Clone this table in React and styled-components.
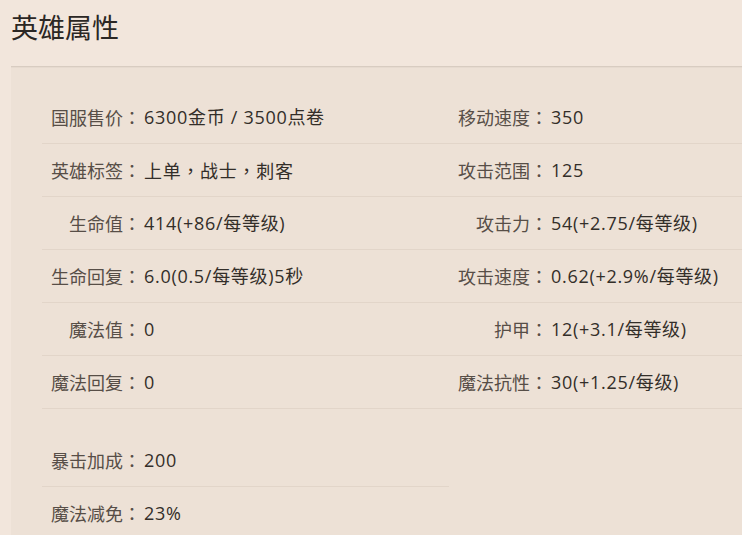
import React from 'react';
import styled, { createGlobalStyle } from 'styled-components';

const Global = createGlobalStyle`
  html, body { margin: 0; padding: 0; background: #f2e6dc; overflow: hidden; }
  body { font-family: "Open Sans", "Noto Sans CJK SC", sans-serif; }
`;

const Page = styled.div`
  width: 742px;
  height: 535px;
  padding-left: 11px;
  box-sizing: border-box;
`;

const Heading = styled.h2`
  margin: 0;
  height: 66px;
  padding: 9px 0 0 0;
  box-sizing: border-box;
  font-size: 27px;
  font-weight: 400;
  line-height: 38px;
  color: #2b2724;
`;

const Panel = styled.section`
  background: #ede1d6;
  border-top: 1px solid #d8ccc1;
  box-shadow: 0 1px 0 #e6dacf inset;
  padding: 24px 0 0 31px;
  height: 470px;
  box-sizing: border-box;
`;

const Grid = styled.div`
  display: grid;
  grid-template-columns: ${p => p.$cols};
  margin-bottom: 25px;
`;

const Cell = styled.div`
  display: flex;
  align-items: center;
  height: 52px;
  border-bottom: 1px solid #e2d5c9;
  font-size: 18px;
  line-height: 24px;
  white-space: nowrap;
`;

const Label = styled.span`
  width: 99px;
  text-align: right;
  color: #574e47;
`;

const Value = styled.span`
  padding-left: 3px;
  letter-spacing: 0.7px;
  color: #332e29;
`;

/* centred full-width punctuation, as in the original page font */
const Punct = styled.span`
  font-family: "Noto Sans CJK TC", "Noto Sans CJK SC", sans-serif;
`;

const withPunct = text =>
  text.split(/(，)/).map((part, i) => (part === '，' ? <Punct key={i}>，</Punct> : part));

const Stat = ({ label, value }) => (
  <Cell>
    <Label>{label}<Punct>：</Punct></Label>
    <Value>{withPunct(value)}</Value>
  </Cell>
);

const main = [
  ['国服售价', '6300金币 / 3500点卷'], ['移动速度', '350'],
  ['英雄标签', '上单，战士，刺客'], ['攻击范围', '125'],
  ['生命值', '414(+86/每等级)'], ['攻击力', '54(+2.75/每等级)'],
  ['生命回复', '6.0(0.5/每等级)5秒'], ['攻击速度', '0.62(+2.9%/每等级)'],
  ['魔法值', '0'], ['护甲', '12(+3.1/每等级)'],
  ['魔法回复', '0'], ['魔法抗性', '30(+1.25/每级)'],
];

const extra = [
  ['暴击加成', '200'],
  ['魔法减免', '23%'],
];

export default function App() {
  return (
    <Page>
      <Global />
      <Heading>英雄属性</Heading>
      <Panel>
        <Grid $cols="407px 1fr">
          {main.map(([l, v]) => <Stat key={l} label={l} value={v} />)}
        </Grid>
        <Grid $cols="407px">
          {extra.map(([l, v]) => <Stat key={l} label={l} value={v} />)}
        </Grid>
      </Panel>
    </Page>
  );
}
